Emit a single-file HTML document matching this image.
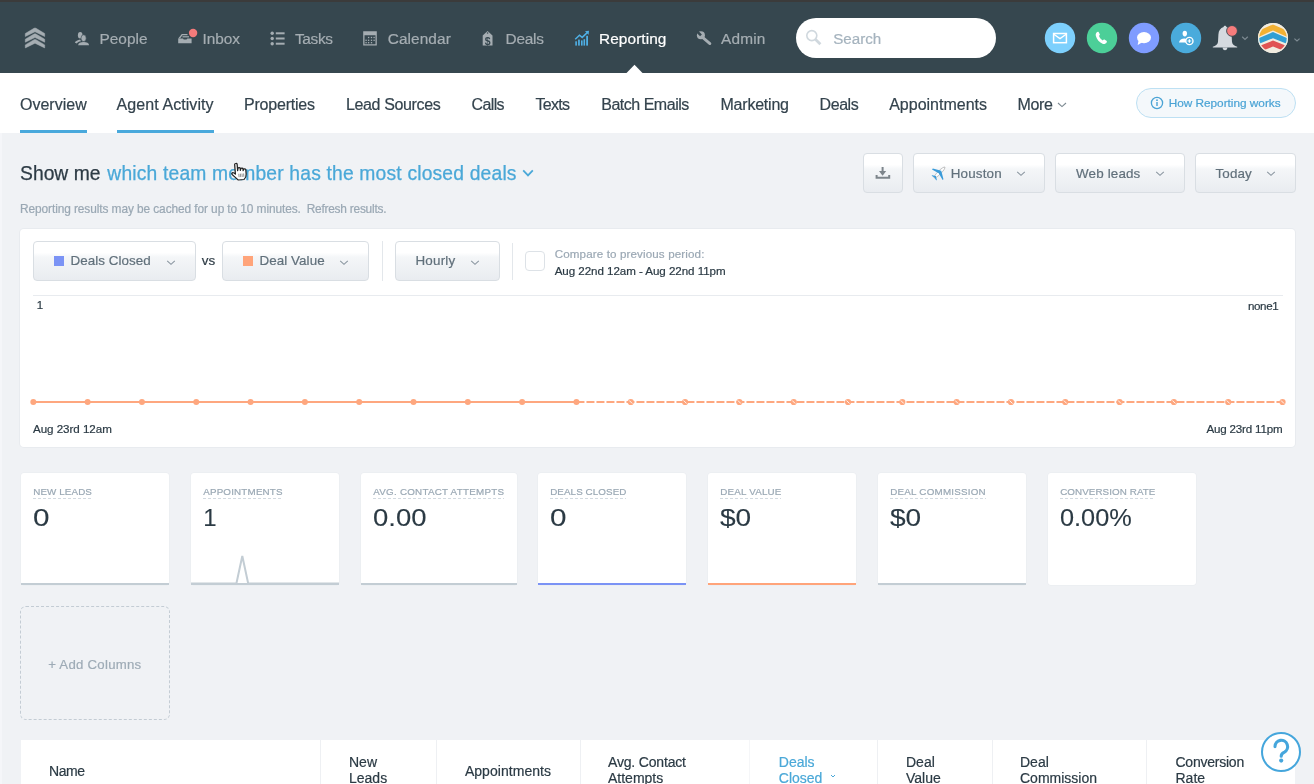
<!DOCTYPE html>
<html><head><meta charset="utf-8"><title>Reporting</title>
<style>
html,body{margin:0;padding:0;}
body{width:1314px;height:784px;overflow:hidden;position:relative;background:#f0f2f5;font-family:"Liberation Sans", sans-serif;}
</style></head><body>
<div id="root" style="position:absolute;left:0;top:0;width:1314px;height:784px;overflow:hidden;will-change:transform;background:#f0f2f5">
<div style="position:absolute;left:0px;top:0px;width:1314px;height:73px;background:#36474f"></div>
<div style="position:absolute;left:0px;top:0px;width:1314px;height:2px;background:#3b3b3b"></div>
<svg style="position:absolute;left:0;top:0" width="1314" height="73"><path fill="#a5adb2" d="M25.3,33.5 L34,28.3 Q35,27.7 36,28.3 L44.7,33.5 L44.7,36.5 L35,31.8 L25.3,36.5 Z" stroke="#a5adb2" stroke-width="0.5" stroke-linejoin="round"/><path fill="#a5adb2" d="M25.3,39.2 L34,34.0 Q35,33.4 36,34.0 L44.7,39.2 L44.7,42.2 L35,37.5 L25.3,42.2 Z" stroke="#a5adb2" stroke-width="0.5" stroke-linejoin="round"/><path fill="#a5adb2" d="M25.3,44.9 L34,39.7 Q35,39.1 36,39.7 L44.7,44.9 L44.7,47.9 L35,43.2 L25.3,47.9 Z" stroke="#a5adb2" stroke-width="0.5" stroke-linejoin="round"/><g fill="#a5adb2"><ellipse cx="80.2" cy="35.2" rx="2.3" ry="3.2"/><path d="M74.8,42.6 C75.6,41.2 77.6,40.2 80.2,39.6 L81,41.2 C79.2,41.6 77.6,42.4 76.6,43.4 Z"/><ellipse cx="83.6" cy="38.2" rx="2.6" ry="3.4" stroke="#36474f" stroke-width="0.6"/><path d="M78.1,45.2 C78.3,43.2 80.4,42.0 83.6,42.0 C86.8,42.0 88.9,43.2 89.1,45.2 Z"/></g><g fill="#a5adb2"><path d="M178.2,38.6 L181.8,34 L187.5,34 L187.5,35.3 L182.5,35.3 L180,38.6 Z"/><path d="M178.2,38.4 L183,38.4 C183.6,40 186.6,40 187.4,38.4 L191.6,38.4 L191.6,43.2 L178.2,43.2 Z"/><rect x="182.5" y="36.2" width="6.5" height="1.2"/></g><circle cx="193.1" cy="33" r="4.2" fill="#f47b7b"/><g fill="#a5adb2"><circle cx="272.2" cy="33.3" r="1.7"/><rect x="275.8" y="32.3" width="8.8" height="2"/><circle cx="272.2" cy="38.5" r="1.7"/><rect x="275.8" y="37.5" width="8.8" height="2"/><circle cx="272.2" cy="43.7" r="1.7"/><rect x="275.8" y="42.7" width="8.8" height="2"/></g><g fill="#a5adb2"><path d="M363.2,31.2 L376.8,31.2 L376.8,45.6 L363.2,45.6 Z M364.5,35.2 L364.5,44.3 L375.5,44.3 L375.5,35.2 Z" fill-rule="evenodd"/><rect x="367.95000000000005" y="36.85" width="1.3" height="1.3"/><rect x="370.85" y="36.85" width="1.3" height="1.3"/><rect x="373.45000000000005" y="36.85" width="1.3" height="1.3"/><rect x="365.45000000000005" y="39.65" width="1.3" height="1.3"/><rect x="367.95000000000005" y="39.65" width="1.3" height="1.3"/><rect x="370.85" y="39.65" width="1.3" height="1.3"/><rect x="373.45000000000005" y="39.65" width="1.3" height="1.3"/><rect x="365.45000000000005" y="42.050000000000004" width="1.3" height="1.3"/><rect x="367.95000000000005" y="42.050000000000004" width="1.3" height="1.3"/><rect x="370.85" y="42.050000000000004" width="1.3" height="1.3"/></g><path fill="#a5adb2" fill-rule="evenodd" d="M487.6,31 L492.5,35.4 L492.5,45.6 L482.7,45.6 L482.7,35.4 Z M487.6,33 m-0.8,0 a0.8,0.8 0 1,0 1.6,0 a0.8,0.8 0 1,0 -1.6,0 Z"/><text x="487.6" y="44.6" font-family="Liberation Sans" font-size="10.5" font-weight="bold" fill="#36474f" text-anchor="middle">$</text><g fill="#4fb0e6"><rect x="575.3" y="41.3" width="1.6" height="4.3"/><rect x="578.1" y="39.6" width="1.7" height="6"/><rect x="581" y="40.4" width="1.6" height="5.2"/><rect x="583.5" y="39.2" width="1.6" height="6.4"/><rect x="586.2" y="35.8" width="1.8" height="9.8"/></g><polyline points="575.2,39.2 579.5,35.2 582.2,37.4 587.2,32.6" fill="none" stroke="#4fb0e6" stroke-width="1.5"/><polygon points="585,31.2 589,30.8 588.6,34.8" fill="#4fb0e6"/><line x1="702.6" y1="37.4" x2="709.9" y2="43.6" stroke="#a5adb2" stroke-width="2.8" stroke-linecap="round"/><circle cx="700.9" cy="35.3" r="4" fill="#a5adb2"/><rect x="699.6" y="29.6" width="2.6" height="5.8" fill="#36474f" transform="rotate(-45 700.9 35.3)"/></svg>
<div style="position:absolute;left:99.40px;top:31.07px;font-size:15.4px;line-height:15.4px;color:#a5adb2;white-space:nowrap;-webkit-text-stroke:0.2px #a5adb2;letter-spacing:0.053px;">People</div>
<div style="position:absolute;left:202.40px;top:31.07px;font-size:15.4px;line-height:15.4px;color:#a5adb2;white-space:nowrap;-webkit-text-stroke:0.2px #a5adb2;letter-spacing:-0.014px;">Inbox</div>
<div style="position:absolute;left:295.00px;top:31.07px;font-size:15.4px;line-height:15.4px;color:#a5adb2;white-space:nowrap;-webkit-text-stroke:0.2px #a5adb2;letter-spacing:-0.336px;">Tasks</div>
<div style="position:absolute;left:387.70px;top:31.07px;font-size:15.4px;line-height:15.4px;color:#a5adb2;white-space:nowrap;-webkit-text-stroke:0.2px #a5adb2;letter-spacing:0.090px;">Calendar</div>
<div style="position:absolute;left:505.60px;top:31.07px;font-size:15.4px;line-height:15.4px;color:#a5adb2;white-space:nowrap;-webkit-text-stroke:0.2px #a5adb2;letter-spacing:-0.240px;">Deals</div>
<div style="position:absolute;left:599.00px;top:31.07px;font-size:15.4px;line-height:15.4px;color:#ffffff;white-space:nowrap;letter-spacing:0.083px;-webkit-text-stroke:0.2px #fff">Reporting</div>
<div style="position:absolute;left:721.00px;top:31.07px;font-size:15.4px;line-height:15.4px;color:#a5adb2;white-space:nowrap;-webkit-text-stroke:0.2px #a5adb2;letter-spacing:0.194px;">Admin</div>
<svg style="position:absolute;left:626px;top:64px" width="18" height="10"><polygon points="0.5,9 8.5,0.7 16.5,9" fill="#fff"/></svg>
<div style="position:absolute;left:796px;top:18px;width:200px;height:40px;background:#fff;border-radius:20px"></div>
<svg style="position:absolute;left:800px;top:24px" width="30" height="28"><circle cx="11.8" cy="11.6" r="5" fill="none" stroke="#d0d8de" stroke-width="1.6"/><line x1="15.6" y1="15.6" x2="20.4" y2="20.3" stroke="#d0d8de" stroke-width="2.8"/></svg>
<div style="position:absolute;left:833.20px;top:30.64px;font-size:15.2px;line-height:15.2px;color:#a5b3be;white-space:nowrap;-webkit-text-stroke:0.2px #a5b3be;letter-spacing:-0.005px;">Search</div>
<svg style="position:absolute;left:1040px;top:18px" width="274" height="40"><circle cx="20" cy="20" r="15.2" fill="#7dd0fd"/><rect x="13.6" y="15.5" width="12.8" height="9.2" fill="none" stroke="#fff" stroke-width="1.5"/><polyline points="13.8,16.2 20,20.6 26.2,16.2" fill="none" stroke="#fff" stroke-width="1.4"/><circle cx="62" cy="20" r="15.2" fill="#4ccf98"/><path d="M56.6,14.6 C57,14 57.8,13.6 58.6,14 L59.8,16.2 C60,16.8 59.6,17.4 59,17.8 C59.6,19.8 61,21.4 62.8,22.4 C63.2,21.8 63.8,21.4 64.4,21.6 L66.4,22.8 C67,23.2 67,24 66.6,24.6 C65.8,25.8 64.4,26.4 63,26 C59.4,24.6 56.6,21.4 55.8,17.8 C55.6,16.6 55.8,15.4 56.6,14.6 Z" fill="#fff"/><circle cx="104" cy="20" r="15.2" fill="#7f9cff"/><ellipse cx="104" cy="19.6" rx="7" ry="5.6" fill="#fff"/><path d="M98.6,22.4 L97.6,27 L102.4,24.2 Z" fill="#fff"/><circle cx="146" cy="20" r="15.2" fill="#4aabdc"/><ellipse cx="144.8" cy="15.6" rx="2.2" ry="2.8" fill="#fff"/><path d="M139,24.6 C139.4,22 141.6,20.6 144.6,20.6 C145.6,20.6 146.4,20.8 147,21 C146.2,22 146,23.4 146.4,24.6 Z" fill="#fff"/><circle cx="149.4" cy="23" r="3.6" fill="#4aabdc" stroke="#fff" stroke-width="1.4"/><path d="M149.4,21.2 v3.6 M147.6,23 h3.6" stroke="#fff" stroke-width="1.2"/><path fill="#d5dadf" d="M185,7.8 C185.8,7.8 186.4,8.4 186.4,9 C189.6,10 191.4,12.8 191.6,16.4 L192,24 C192.4,26.6 194.4,27.6 197.2,28.8 L197.2,29.6 L172.8,29.6 L172.8,28.8 C175.6,27.6 177.6,26.6 178,24 L178.4,16.4 C178.6,12.8 180.4,10 183.6,9 C183.6,8.4 184.2,7.8 185,7.8 Z"/><path fill="#d5dadf" d="M182.6,29.4 L187.4,29.4 C187.4,31 186.4,32.2 185,32.2 C183.6,32.2 182.6,31 182.6,29.4 Z"/><circle cx="192" cy="12.9" r="5.4" fill="#f67c7c" stroke="#36474f" stroke-width="0.9"/><polyline points="202.2,18.8 205,21.4 207.8,18.8" fill="none" stroke="#7d8a92" stroke-width="1.2"/><defs><clipPath id="av"><circle cx="233" cy="20" r="15"/></clipPath></defs><g clip-path="url(#av)"><rect x="215" y="2" width="36" height="36" fill="#f1ece0"/><polygon fill="#f2b133" points="217,13.4 233,6.4 249,13.4 249,19.6 233,12.4 217,19.6"/><polygon fill="#319fd4" points="217,20.8 233,14 249,20.8 249,26.6 233,20.2 217,26.6"/><polygon fill="#e05353" points="217,28.8 233,22.6 249,28.8 249,34.8 233,28.6 217,34.8"/></g><circle cx="233" cy="20" r="14.4" fill="none" stroke="#f1ece0" stroke-width="1.3"/><polyline points="254.4,20.6 257,23 259.6,20.6" fill="none" stroke="#7d8a92" stroke-width="1.2"/></svg>
<div style="position:absolute;left:0px;top:73px;width:1314px;height:60px;background:#fff"></div>
<div style="position:absolute;left:20.00px;top:96.86px;font-size:16px;line-height:16px;color:#34434d;white-space:nowrap;-webkit-text-stroke:0.2px #34434d;letter-spacing:0.002px;">Overview</div>
<div style="position:absolute;left:116.60px;top:96.86px;font-size:16px;line-height:16px;color:#34434d;white-space:nowrap;-webkit-text-stroke:0.2px #34434d;letter-spacing:0.073px;">Agent Activity</div>
<div style="position:absolute;left:244.00px;top:96.86px;font-size:16px;line-height:16px;color:#34434d;white-space:nowrap;-webkit-text-stroke:0.2px #34434d;letter-spacing:-0.214px;">Properties</div>
<div style="position:absolute;left:346.00px;top:96.86px;font-size:16px;line-height:16px;color:#34434d;white-space:nowrap;-webkit-text-stroke:0.2px #34434d;letter-spacing:-0.367px;">Lead Sources</div>
<div style="position:absolute;left:471.60px;top:96.86px;font-size:16px;line-height:16px;color:#34434d;white-space:nowrap;-webkit-text-stroke:0.2px #34434d;letter-spacing:-0.641px;">Calls</div>
<div style="position:absolute;left:535.60px;top:96.86px;font-size:16px;line-height:16px;color:#34434d;white-space:nowrap;-webkit-text-stroke:0.2px #34434d;letter-spacing:-0.736px;">Texts</div>
<div style="position:absolute;left:601.20px;top:96.86px;font-size:16px;line-height:16px;color:#34434d;white-space:nowrap;-webkit-text-stroke:0.2px #34434d;letter-spacing:-0.480px;">Batch Emails</div>
<div style="position:absolute;left:720.50px;top:96.86px;font-size:16px;line-height:16px;color:#34434d;white-space:nowrap;-webkit-text-stroke:0.2px #34434d;letter-spacing:-0.219px;">Marketing</div>
<div style="position:absolute;left:819.60px;top:96.86px;font-size:16px;line-height:16px;color:#34434d;white-space:nowrap;-webkit-text-stroke:0.2px #34434d;letter-spacing:-0.452px;">Deals</div>
<div style="position:absolute;left:889.20px;top:96.86px;font-size:16px;line-height:16px;color:#34434d;white-space:nowrap;-webkit-text-stroke:0.2px #34434d;letter-spacing:-0.004px;">Appointments</div>
<div style="position:absolute;left:1017.50px;top:96.86px;font-size:16px;line-height:16px;color:#34434d;white-space:nowrap;-webkit-text-stroke:0.2px #34434d;letter-spacing:-0.318px;">More</div>
<svg style="position:absolute;left:1056px;top:101px" width="12" height="8"><polyline points="2,2 6,5.6 10,2" fill="none" stroke="#7d8a92" stroke-width="1.1"/></svg>
<div style="position:absolute;left:20px;top:130px;width:67px;height:3px;background:#49a9dc"></div>
<div style="position:absolute;left:116.6px;top:130px;width:97px;height:3px;background:#49a9dc"></div>
<div style="position:absolute;left:1136px;top:88px;width:158px;height:28px;background:#f4f8fb;border:1px solid #bde0f3;border-radius:15px"></div>
<svg style="position:absolute;left:1149px;top:95px" width="16" height="16"><circle cx="8" cy="8" r="5.6" fill="none" stroke="#4aa3d5" stroke-width="1.3"/><rect x="7.3" y="7" width="1.4" height="4" fill="#4aa3d5"/><circle cx="8" cy="5.2" r="0.9" fill="#4aa3d5"/></svg>
<div style="position:absolute;left:1168.70px;top:97.62px;font-size:11.8px;line-height:11.8px;color:#4aa3d5;white-space:nowrap;-webkit-text-stroke:0.2px #4aa3d5;letter-spacing:-0.012px;">How Reporting works</div>
<div style="position:absolute;left:0px;top:133px;width:1314px;height:651px;background:#f0f2f5"></div>
<div style="position:absolute;left:0px;top:133px;width:2px;height:651px;background:#f5f6f9"></div>
<div style="position:absolute;left:20.00px;top:163.97px;font-size:19.3px;line-height:19.3px;color:#2d3b45;white-space:nowrap;letter-spacing:0.021px;-webkit-text-stroke:0.25px #2d3b45">Show me</div>
<div style="position:absolute;left:107.30px;top:163.97px;font-size:19.3px;line-height:19.3px;color:#4aa8d8;white-space:nowrap;letter-spacing:0.174px;-webkit-text-stroke:0.25px #4aa8d8">which team member has the most closed deals</div>
<svg style="position:absolute;left:520px;top:166px" width="16" height="14"><polyline points="3.2,4.4 8,9.4 12.8,4.4" fill="none" stroke="#4aa8d8" stroke-width="1.8"/></svg>
<div style="position:absolute;left:20.00px;top:204.33px;font-size:11.9px;line-height:11.9px;color:#9aa8b4;white-space:nowrap;-webkit-text-stroke:0.2px #9aa8b4;letter-spacing:-0.089px;">Reporting results may be cached for up to 10 minutes.</div>
<div style="position:absolute;left:306.70px;top:204.33px;font-size:11.9px;line-height:11.9px;color:#9aa8b4;white-space:nowrap;-webkit-text-stroke:0.2px #9aa8b4;letter-spacing:-0.231px;">Refresh results.</div>
<div style="position:absolute;left:863px;top:153px;width:40px;height:40px;background:linear-gradient(#fff 0%,#fff 28%,#f4f6f8 40%,#e9ecf0 100%);border:1px solid #d9dee3;border-radius:4px;box-sizing:border-box"></div>
<svg style="position:absolute;left:870px;top:162px" width="26" height="22"><path d="M12.6,5 v7" stroke="#7d858b" stroke-width="2"/><polygon points="9,9 16.2,9 12.6,13.8" fill="#7d858b"/><polyline points="6.6,13 6.6,15.8 19.2,15.8 19.2,13" fill="none" stroke="#7d858b" stroke-width="2"/></svg>
<div style="position:absolute;left:913px;top:153px;width:132px;height:40px;background:linear-gradient(#fff 0%,#fff 28%,#f4f6f8 40%,#e9ecf0 100%);border:1px solid #d9dee3;border-radius:4px;box-sizing:border-box"></div>
<svg style="position:absolute;left:931px;top:164px" width="17" height="17"><g transform="rotate(45 8.5 8.5)"><ellipse cx="8.5" cy="8.5" rx="1.6" ry="7.6" fill="#fff" stroke="#888" stroke-width="0.5"/><polygon points="8.5,6 1,10.4 1,11.6 8.5,9.6 16,11.6 16,10.4" fill="#3a9bd9"/><polygon points="8.5,13.6 5.2,15.6 5.2,16.4 8.5,15.6 11.8,16.4 11.8,15.6" fill="#3a9bd9"/></g></svg>
<div style="position:absolute;left:950.70px;top:166.56px;font-size:13.4px;line-height:13.4px;color:#61707b;white-space:nowrap;-webkit-text-stroke:0.2px #61707b;letter-spacing:0.188px;">Houston</div>
<svg style="position:absolute;left:1015px;top:169.2px" width="20" height="12"><polyline points="2.2,2.8 6,6.4 9.8,2.8" fill="none" stroke="#8a96a0" stroke-width="1.05"/></svg>
<div style="position:absolute;left:1055px;top:153px;width:130px;height:40px;background:linear-gradient(#fff 0%,#fff 28%,#f4f6f8 40%,#e9ecf0 100%);border:1px solid #d9dee3;border-radius:4px;box-sizing:border-box"></div>
<div style="position:absolute;left:1076.00px;top:166.56px;font-size:13.4px;line-height:13.4px;color:#61707b;white-space:nowrap;-webkit-text-stroke:0.2px #61707b;letter-spacing:0.159px;">Web leads</div>
<svg style="position:absolute;left:1154px;top:169.2px" width="20" height="12"><polyline points="2.2,2.8 6,6.4 9.8,2.8" fill="none" stroke="#8a96a0" stroke-width="1.05"/></svg>
<div style="position:absolute;left:1195px;top:153px;width:101px;height:40px;background:linear-gradient(#fff 0%,#fff 28%,#f4f6f8 40%,#e9ecf0 100%);border:1px solid #d9dee3;border-radius:4px;box-sizing:border-box"></div>
<div style="position:absolute;left:1215.50px;top:166.56px;font-size:13.4px;line-height:13.4px;color:#61707b;white-space:nowrap;-webkit-text-stroke:0.2px #61707b;letter-spacing:0.141px;">Today</div>
<svg style="position:absolute;left:1265px;top:169.2px" width="20" height="12"><polyline points="2.2,2.8 6,6.4 9.8,2.8" fill="none" stroke="#8a96a0" stroke-width="1.05"/></svg>
<div style="position:absolute;left:20px;top:228.5px;width:1275px;height:218.5px;background:#fff;border-radius:4px;box-shadow:0 0 0 1px #e8ebef"></div>
<div style="position:absolute;left:33px;top:241px;width:163px;height:40px;background:linear-gradient(#fff 0%,#fff 28%,#f4f6f8 40%,#e9ecf0 100%);border:1px solid #d9dee3;border-radius:4px;box-sizing:border-box"></div>
<div style="position:absolute;left:54px;top:256px;width:10px;height:10px;background:#7b93f5"></div>
<div style="position:absolute;left:70.50px;top:254.26px;font-size:13.4px;line-height:13.4px;color:#61707b;white-space:nowrap;-webkit-text-stroke:0.2px #61707b;letter-spacing:0.060px;">Deals Closed</div>
<svg style="position:absolute;left:164.5px;top:257.5px" width="20" height="12"><polyline points="2.2,2.8 6,6.4 9.8,2.8" fill="none" stroke="#8a96a0" stroke-width="1.05"/></svg>
<div style="position:absolute;left:201.80px;top:254.26px;font-size:13.4px;line-height:13.4px;color:#2d3b45;white-space:nowrap;-webkit-text-stroke:0.2px #2d3b45;letter-spacing:-0.091px;">vs</div>
<div style="position:absolute;left:222px;top:241px;width:146.5px;height:40px;background:linear-gradient(#fff 0%,#fff 28%,#f4f6f8 40%,#e9ecf0 100%);border:1px solid #d9dee3;border-radius:4px;box-sizing:border-box"></div>
<div style="position:absolute;left:243px;top:256px;width:10px;height:10px;background:#ffa47a"></div>
<div style="position:absolute;left:259.50px;top:254.26px;font-size:13.4px;line-height:13.4px;color:#61707b;white-space:nowrap;-webkit-text-stroke:0.2px #61707b;letter-spacing:0.065px;">Deal Value</div>
<svg style="position:absolute;left:338px;top:257.5px" width="20" height="12"><polyline points="2.2,2.8 6,6.4 9.8,2.8" fill="none" stroke="#8a96a0" stroke-width="1.05"/></svg>
<div style="position:absolute;left:381.5px;top:241px;width:1px;height:40px;background:#e3e7eb"></div>
<div style="position:absolute;left:394.5px;top:241px;width:105px;height:40px;background:linear-gradient(#fff 0%,#fff 28%,#f4f6f8 40%,#e9ecf0 100%);border:1px solid #d9dee3;border-radius:4px;box-sizing:border-box"></div>
<div style="position:absolute;left:415.50px;top:254.26px;font-size:13.4px;line-height:13.4px;color:#61707b;white-space:nowrap;-webkit-text-stroke:0.2px #61707b;letter-spacing:0.199px;">Hourly</div>
<svg style="position:absolute;left:469px;top:257.5px" width="20" height="12"><polyline points="2.2,2.8 6,6.4 9.8,2.8" fill="none" stroke="#8a96a0" stroke-width="1.05"/></svg>
<div style="position:absolute;left:511.5px;top:243px;width:1px;height:37px;background:#e3e7eb"></div>
<div style="position:absolute;left:524.5px;top:251.4px;width:20px;height:20px;border:1px solid #dde2e7;border-radius:4px;box-sizing:border-box;background:#fff"></div>
<div style="position:absolute;left:554.70px;top:248.39px;font-size:11.6px;line-height:11.6px;color:#9ba8b4;white-space:nowrap;-webkit-text-stroke:0.2px #9ba8b4;letter-spacing:0.131px;">Compare to previous period:</div>
<div style="position:absolute;left:554.70px;top:264.99px;font-size:11.6px;line-height:11.6px;color:#2b3a44;white-space:nowrap;-webkit-text-stroke:0.2px #2b3a44;letter-spacing:-0.058px;">Aug 22nd 12am - Aug 22nd 11pm</div>
<div style="position:absolute;left:33px;top:295px;width:1250px;height:1px;background:#e8ebef"></div>
<div style="position:absolute;left:36.70px;top:299.87px;font-size:11.5px;line-height:11.5px;color:#2b3a44;white-space:nowrap;-webkit-text-stroke:0.2px #2b3a44;">1</div>
<div style="position:absolute;right:35.69px;top:299.79px;font-size:11.6px;line-height:11.6px;color:#2b3a44;white-space:nowrap;-webkit-text-stroke:0.2px #2b3a44;letter-spacing:-0.388px;">none1</div>
<div style="position:absolute;left:33.00px;top:422.79px;font-size:11.6px;line-height:11.6px;color:#2b3a44;white-space:nowrap;-webkit-text-stroke:0.2px #2b3a44;letter-spacing:-0.040px;">Aug 23rd 12am</div>
<div style="position:absolute;right:31.48px;top:422.79px;font-size:11.6px;line-height:11.6px;color:#2b3a44;white-space:nowrap;-webkit-text-stroke:0.2px #2b3a44;letter-spacing:-0.177px;">Aug 23rd 11pm</div>
<svg style="position:absolute;left:0;top:380px" width="1314" height="44"><line x1="33.3" y1="22" x2="576.4499999999999" y2="22" stroke="#fea77f" stroke-width="1.9"/><line x1="576.4499999999999" y1="22" x2="1282.5449999999998" y2="22" stroke="#fea77f" stroke-width="1.9" stroke-dasharray="8,2"/><circle cx="33.30" cy="22" r="3.0" fill="#fea77f"/><circle cx="87.61" cy="22" r="3.0" fill="#fea77f"/><circle cx="141.93" cy="22" r="3.0" fill="#fea77f"/><circle cx="196.25" cy="22" r="3.0" fill="#fea77f"/><circle cx="250.56" cy="22" r="3.0" fill="#fea77f"/><circle cx="304.88" cy="22" r="3.0" fill="#fea77f"/><circle cx="359.19" cy="22" r="3.0" fill="#fea77f"/><circle cx="413.50" cy="22" r="3.0" fill="#fea77f"/><circle cx="467.82" cy="22" r="3.0" fill="#fea77f"/><circle cx="522.13" cy="22" r="3.0" fill="#fea77f"/><circle cx="576.45" cy="22" r="3.0" fill="#fea77f"/><circle cx="630.76" cy="22" r="3.1" fill="#fea77f"/><line x1="629.26" y1="20.5" x2="632.26" y2="23.5" stroke="#fff" stroke-width="0.9"/><circle cx="685.08" cy="22" r="3.1" fill="#fea77f"/><line x1="683.58" y1="20.5" x2="686.58" y2="23.5" stroke="#fff" stroke-width="0.9"/><circle cx="739.39" cy="22" r="3.1" fill="#fea77f"/><line x1="737.89" y1="20.5" x2="740.89" y2="23.5" stroke="#fff" stroke-width="0.9"/><circle cx="793.71" cy="22" r="3.1" fill="#fea77f"/><line x1="792.21" y1="20.5" x2="795.21" y2="23.5" stroke="#fff" stroke-width="0.9"/><circle cx="848.02" cy="22" r="3.1" fill="#fea77f"/><line x1="846.52" y1="20.5" x2="849.52" y2="23.5" stroke="#fff" stroke-width="0.9"/><circle cx="902.34" cy="22" r="3.1" fill="#fea77f"/><line x1="900.84" y1="20.5" x2="903.84" y2="23.5" stroke="#fff" stroke-width="0.9"/><circle cx="956.65" cy="22" r="3.1" fill="#fea77f"/><line x1="955.15" y1="20.5" x2="958.15" y2="23.5" stroke="#fff" stroke-width="0.9"/><circle cx="1010.97" cy="22" r="3.1" fill="#fea77f"/><line x1="1009.47" y1="20.5" x2="1012.47" y2="23.5" stroke="#fff" stroke-width="0.9"/><circle cx="1065.28" cy="22" r="3.1" fill="#fea77f"/><line x1="1063.78" y1="20.5" x2="1066.78" y2="23.5" stroke="#fff" stroke-width="0.9"/><circle cx="1119.60" cy="22" r="3.1" fill="#fea77f"/><line x1="1118.10" y1="20.5" x2="1121.10" y2="23.5" stroke="#fff" stroke-width="0.9"/><circle cx="1173.91" cy="22" r="3.1" fill="#fea77f"/><line x1="1172.41" y1="20.5" x2="1175.41" y2="23.5" stroke="#fff" stroke-width="0.9"/><circle cx="1228.23" cy="22" r="3.1" fill="#fea77f"/><line x1="1226.73" y1="20.5" x2="1229.73" y2="23.5" stroke="#fff" stroke-width="0.9"/><circle cx="1282.54" cy="22" r="3.1" fill="#fea77f"/><line x1="1281.04" y1="20.5" x2="1284.04" y2="23.5" stroke="#fff" stroke-width="0.9"/></svg>
<div style="position:absolute;left:21px;top:473px;width:148px;height:111.5px;background:#fff;border-radius:3px;box-shadow:0 0 0 0.5px #e8ebef"></div>
<div style="position:absolute;left:33.20px;top:487.31px;font-size:9.8px;line-height:9.8px;color:#9aa8b4;white-space:nowrap;-webkit-text-stroke:0.2px #9aa8b4;letter-spacing:0.123px;">NEW LEADS</div>
<div style="position:absolute;left:33.2px;top:498px;width:58.7px;height:1px;background:repeating-linear-gradient(90deg,#d3dae0 0 3px,transparent 3px 5px)"></div>
<div style="position:absolute;left:21px;top:582.5px;width:148px;height:2px;background:#c3cdd4"></div>
<div style="position:absolute;left:33.30px;top:506.00px;font-size:24px;line-height:24px;color:#2b3a44;white-space:nowrap;transform:scaleX(1.2351);transform-origin:0 0;-webkit-text-stroke:0.1px #2b3a44">0</div>
<div style="position:absolute;left:191px;top:473px;width:148px;height:111.5px;background:#fff;border-radius:3px;box-shadow:0 0 0 0.5px #e8ebef"></div>
<div style="position:absolute;left:203.20px;top:487.31px;font-size:9.8px;line-height:9.8px;color:#9aa8b4;white-space:nowrap;-webkit-text-stroke:0.2px #9aa8b4;letter-spacing:0.191px;">APPOINTMENTS</div>
<div style="position:absolute;left:203.2px;top:498px;width:79.4px;height:1px;background:repeating-linear-gradient(90deg,#d3dae0 0 3px,transparent 3px 5px)"></div>
<div style="position:absolute;left:191px;top:582.5px;width:148px;height:2px;background:#c3cdd4"></div>
<div style="position:absolute;left:203.30px;top:506.00px;font-size:24px;line-height:24px;color:#2b3a44;white-space:nowrap;-webkit-text-stroke:0.1px #2b3a44">1</div>
<div style="position:absolute;left:361px;top:473px;width:155.5px;height:111.5px;background:#fff;border-radius:3px;box-shadow:0 0 0 0.5px #e8ebef"></div>
<div style="position:absolute;left:373.20px;top:487.31px;font-size:9.8px;line-height:9.8px;color:#9aa8b4;white-space:nowrap;-webkit-text-stroke:0.2px #9aa8b4;letter-spacing:0.262px;">AVG. CONTACT ATTEMPTS</div>
<div style="position:absolute;left:373.2px;top:498px;width:130.8px;height:1px;background:repeating-linear-gradient(90deg,#d3dae0 0 3px,transparent 3px 5px)"></div>
<div style="position:absolute;left:361px;top:582.5px;width:155.5px;height:2px;background:#c3cdd4"></div>
<div style="position:absolute;left:373.30px;top:506.00px;font-size:24px;line-height:24px;color:#2b3a44;white-space:nowrap;transform:scaleX(1.1452);transform-origin:0 0;-webkit-text-stroke:0.1px #2b3a44">0.00</div>
<div style="position:absolute;left:538px;top:473px;width:148px;height:111.5px;background:#fff;border-radius:3px;box-shadow:0 0 0 0.5px #e8ebef"></div>
<div style="position:absolute;left:550.20px;top:487.31px;font-size:9.8px;line-height:9.8px;color:#9aa8b4;white-space:nowrap;-webkit-text-stroke:0.2px #9aa8b4;letter-spacing:0.096px;">DEALS CLOSED</div>
<div style="position:absolute;left:550.2px;top:498px;width:76.2px;height:1px;background:repeating-linear-gradient(90deg,#d3dae0 0 3px,transparent 3px 5px)"></div>
<div style="position:absolute;left:538px;top:582.5px;width:148px;height:2px;background:#7b93f5"></div>
<div style="position:absolute;left:550.30px;top:506.00px;font-size:24px;line-height:24px;color:#2b3a44;white-space:nowrap;transform:scaleX(1.2351);transform-origin:0 0;-webkit-text-stroke:0.1px #2b3a44">0</div>
<div style="position:absolute;left:708px;top:473px;width:148px;height:111.5px;background:#fff;border-radius:3px;box-shadow:0 0 0 0.5px #e8ebef"></div>
<div style="position:absolute;left:720.20px;top:487.31px;font-size:9.8px;line-height:9.8px;color:#9aa8b4;white-space:nowrap;-webkit-text-stroke:0.2px #9aa8b4;letter-spacing:0.205px;">DEAL VALUE</div>
<div style="position:absolute;left:720.2px;top:498px;width:61.2px;height:1px;background:repeating-linear-gradient(90deg,#d3dae0 0 3px,transparent 3px 5px)"></div>
<div style="position:absolute;left:708px;top:582.5px;width:148px;height:2px;background:#ffa47a"></div>
<div style="position:absolute;left:720.30px;top:506.00px;font-size:24px;line-height:24px;color:#2b3a44;white-space:nowrap;transform:scaleX(1.1684);transform-origin:0 0;-webkit-text-stroke:0.1px #2b3a44">$0</div>
<div style="position:absolute;left:878px;top:473px;width:148px;height:111.5px;background:#fff;border-radius:3px;box-shadow:0 0 0 0.5px #e8ebef"></div>
<div style="position:absolute;left:890.20px;top:487.31px;font-size:9.8px;line-height:9.8px;color:#9aa8b4;white-space:nowrap;-webkit-text-stroke:0.2px #9aa8b4;letter-spacing:0.237px;">DEAL COMMISSION</div>
<div style="position:absolute;left:890.2px;top:498px;width:95.5px;height:1px;background:repeating-linear-gradient(90deg,#d3dae0 0 3px,transparent 3px 5px)"></div>
<div style="position:absolute;left:878px;top:582.5px;width:148px;height:2px;background:#c3cdd4"></div>
<div style="position:absolute;left:890.30px;top:506.00px;font-size:24px;line-height:24px;color:#2b3a44;white-space:nowrap;transform:scaleX(1.1684);transform-origin:0 0;-webkit-text-stroke:0.1px #2b3a44">$0</div>
<div style="position:absolute;left:1048px;top:473px;width:148px;height:111.5px;background:#fff;border-radius:3px;box-shadow:0 0 0 0.5px #e8ebef"></div>
<div style="position:absolute;left:1060.20px;top:487.31px;font-size:9.8px;line-height:9.8px;color:#9aa8b4;white-space:nowrap;-webkit-text-stroke:0.2px #9aa8b4;letter-spacing:0.086px;">CONVERSION RATE</div>
<div style="position:absolute;left:1060.2px;top:498px;width:95.2px;height:1px;background:repeating-linear-gradient(90deg,#d3dae0 0 3px,transparent 3px 5px)"></div>
<div style="position:absolute;left:1060.30px;top:506.00px;font-size:24px;line-height:24px;color:#2b3a44;white-space:nowrap;transform:scaleX(1.0549);transform-origin:0 0;-webkit-text-stroke:0.1px #2b3a44">0.00%</div>
<svg style="position:absolute;left:191px;top:550px" width="148" height="36"><polyline points="0,33.5 45.4,33.5 51.3,6 57.2,33.5 148,33.5" fill="none" stroke="#c3cdd4" stroke-width="2"/></svg>
<div style="position:absolute;left:20px;top:606px;width:150px;height:113.5px;border:1px dashed #c3ccd4;border-radius:6px;box-sizing:border-box"></div>
<div style="position:absolute;left:48.20px;top:658.03px;font-size:13.2px;line-height:13.2px;color:#9eabb6;white-space:nowrap;-webkit-text-stroke:0.2px #9eabb6;letter-spacing:0.266px;">+ Add Columns</div>
<div style="position:absolute;left:20.5px;top:740px;width:1274.5px;height:44px;background:#fff"></div>
<div style="position:absolute;left:320px;top:740px;width:1px;height:44px;background:#eef0f3"></div>
<div style="position:absolute;left:436px;top:740px;width:1px;height:44px;background:#eef0f3"></div>
<div style="position:absolute;left:579.5px;top:740px;width:1px;height:44px;background:#eef0f3"></div>
<div style="position:absolute;left:877px;top:740px;width:1px;height:44px;background:#eef0f3"></div>
<div style="position:absolute;left:991.6px;top:740px;width:1px;height:44px;background:#eef0f3"></div>
<div style="position:absolute;left:1146.4px;top:740px;width:1px;height:44px;background:#eef0f3"></div>
<div style="position:absolute;left:749.4px;top:740px;width:1px;height:44px;background:#f5f6f8"></div>
<div style="position:absolute;left:49.00px;top:763.66px;font-size:14px;line-height:14px;color:#2b3a44;white-space:nowrap;-webkit-text-stroke:0.2px #2b3a44;letter-spacing:-0.453px;">Name</div>
<div style="position:absolute;left:349.00px;top:754.96px;font-size:14px;line-height:14px;color:#2b3a44;white-space:nowrap;-webkit-text-stroke:0.2px #2b3a44;">New</div>
<div style="position:absolute;left:349.00px;top:771.16px;font-size:14px;line-height:14px;color:#2b3a44;white-space:nowrap;-webkit-text-stroke:0.2px #2b3a44;">Leads</div>
<div style="position:absolute;left:464.90px;top:763.66px;font-size:14px;line-height:14px;color:#2b3a44;white-space:nowrap;-webkit-text-stroke:0.2px #2b3a44;letter-spacing:0.045px;">Appointments</div>
<div style="position:absolute;left:608.00px;top:754.96px;font-size:14px;line-height:14px;color:#2b3a44;white-space:nowrap;-webkit-text-stroke:0.2px #2b3a44;letter-spacing:-0.173px;">Avg. Contact</div>
<div style="position:absolute;left:608.00px;top:771.16px;font-size:14px;line-height:14px;color:#2b3a44;white-space:nowrap;-webkit-text-stroke:0.2px #2b3a44;">Attempts</div>
<div style="position:absolute;left:778.80px;top:754.96px;font-size:14px;line-height:14px;color:#4aa8d8;white-space:nowrap;-webkit-text-stroke:0.2px #4aa8d8;">Deals</div>
<div style="position:absolute;left:778.80px;top:771.16px;font-size:14px;line-height:14px;color:#4aa8d8;white-space:nowrap;-webkit-text-stroke:0.2px #4aa8d8;">Closed</div>
<svg style="position:absolute;left:829px;top:773px" width="10" height="8"><polyline points="2,2 4,4 6,2" fill="none" stroke="#4aa8d8" stroke-width="1"/></svg>
<div style="position:absolute;left:906.00px;top:754.96px;font-size:14px;line-height:14px;color:#2b3a44;white-space:nowrap;-webkit-text-stroke:0.2px #2b3a44;">Deal</div>
<div style="position:absolute;left:906.00px;top:771.16px;font-size:14px;line-height:14px;color:#2b3a44;white-space:nowrap;-webkit-text-stroke:0.2px #2b3a44;">Value</div>
<div style="position:absolute;left:1020.00px;top:754.96px;font-size:14px;line-height:14px;color:#2b3a44;white-space:nowrap;-webkit-text-stroke:0.2px #2b3a44;">Deal</div>
<div style="position:absolute;left:1020.00px;top:771.16px;font-size:14px;line-height:14px;color:#2b3a44;white-space:nowrap;-webkit-text-stroke:0.2px #2b3a44;">Commission</div>
<div style="position:absolute;left:1175.50px;top:754.96px;font-size:14px;line-height:14px;color:#2b3a44;white-space:nowrap;-webkit-text-stroke:0.2px #2b3a44;letter-spacing:-0.236px;">Conversion</div>
<div style="position:absolute;left:1175.50px;top:771.16px;font-size:14px;line-height:14px;color:#2b3a44;white-space:nowrap;-webkit-text-stroke:0.2px #2b3a44;">Rate</div>
<div style="position:absolute;left:1261px;top:732px;width:40px;height:40px;border:2.4px solid #45a6dc;border-radius:50%;box-sizing:border-box;background:#fff"></div>
<svg style="position:absolute;left:1261px;top:732px" width="40" height="40"><path d="M14.0,14.6 A6.3,6.3 0 1 1 23.45,20.05 Q20.2,21.6 20.2,24.2" fill="none" stroke="#45a6dc" stroke-width="3.1" stroke-linecap="round"/><circle cx="20.2" cy="28.6" r="2.1" fill="#45a6dc"/></svg>
<svg style="position:absolute;left:228px;top:160px;transform:scaleX(1.14) rotate(-4deg);transform-origin:4px 20px" width="24" height="24"><path d="M7.4,4.6 C7.4,3.4 9.6,3.4 9.6,4.6 L9.6,11 L10,8.8 C10.2,7.8 12,7.8 12,9 L12,11 L12.4,9.4 C12.8,8.4 14.4,8.6 14.4,9.6 L14.4,11.4 L14.8,10.2 C15.2,9.4 16.8,9.6 16.8,10.6 L16.8,15 C16.8,17.6 15.6,19.4 14.6,20.2 L9.6,20.4 C8.4,19 6.6,17 4.6,14.6 C3.8,13.6 4.8,12.2 6,13 L7.4,14.4 Z" fill="#fff" stroke="#222" stroke-width="1.1" stroke-linejoin="round"/><path d="M10.4,14.2 v3.4 M11.8,14.2 v3.4 M13.2,14.2 v3.4 M14.6,14.2 v3.4" stroke="#777" stroke-width="0.7"/></svg>
</div>
</body></html>
